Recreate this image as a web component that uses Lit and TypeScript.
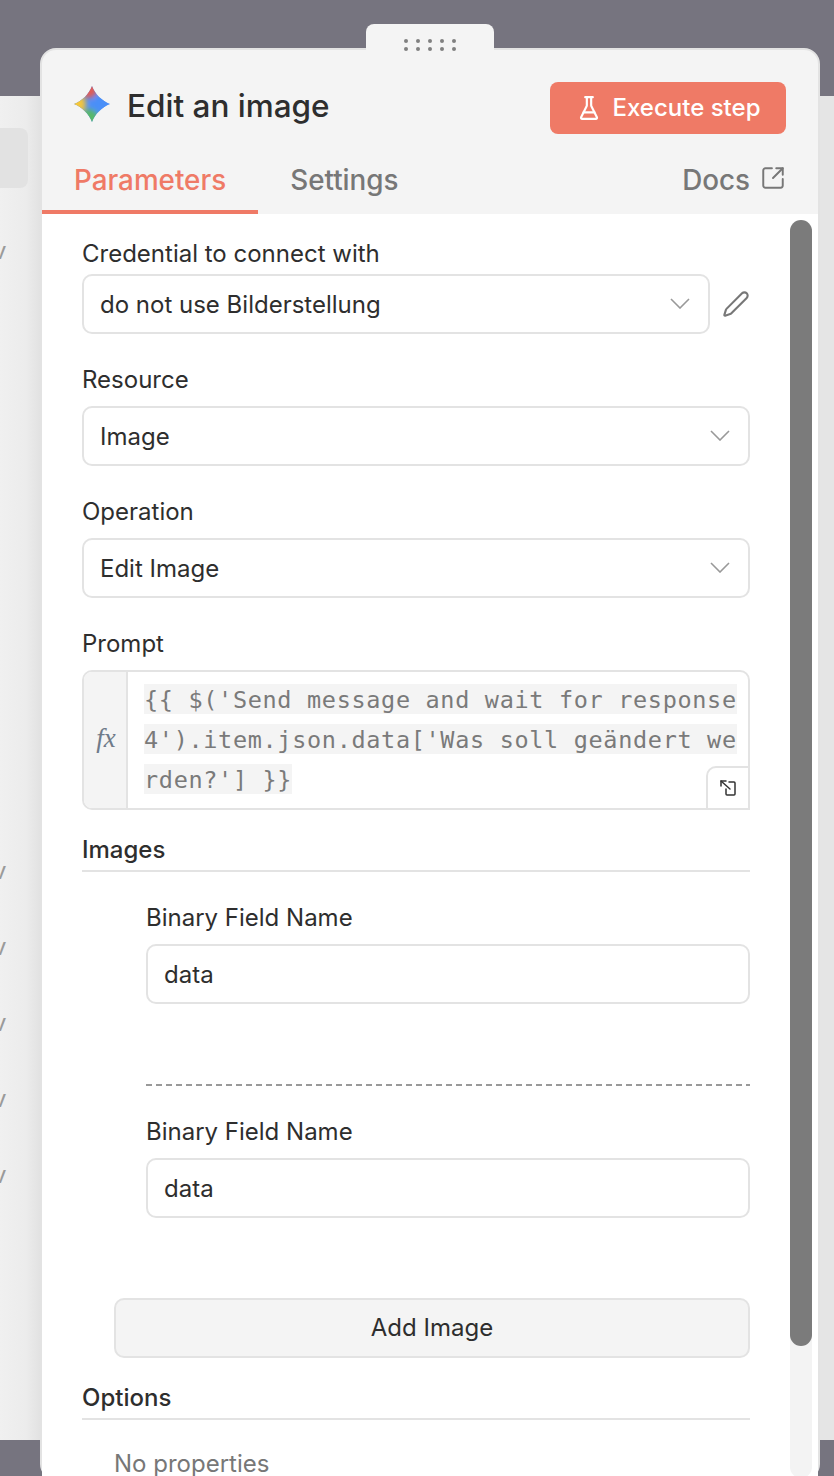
import { LitElement, css, html, svg } from 'lit'
import { customElement } from 'lit/decorators.js'

const chevron = html`<svg class="chevron" viewBox="0 0 20 11" fill="none"><path d="M1 1l9 9 9-9" stroke="#999" stroke-width="1.6"/></svg>`

const handleDots = [0, 12, 24, 36, 48].flatMap((x) =>
  [0, 8].map((y) => svg`<circle cx=${x + 2} cy=${y + 2} r="2" fill="#808080"></circle>`)
)

@customElement('app-root')
export class AppRoot extends LitElement {
  static styles = css`
    :host {
      display: block;
      position: relative;
      width: 834px;
      height: 1476px;
      overflow: hidden;
      font-family: Inter, 'Liberation Sans', sans-serif;
      color: #2e2e2e;
      background: #76747f;
    }

    /* canvas behind the sheet */
    .backdrop {
      position: absolute;
      left: 0;
      right: 0;
      top: 96px;
      height: 1344px;
      background: linear-gradient(90deg, #f0f0f0 0, #ececec 26px, #e2e2e2 40px, #e5e5e5 41px);
    }
    .chip {
      width: 28px;
      height: 60px;
      margin-top: 32px;
      border-radius: 0 8px 8px 0;
      background: #e2e2e2;
    }
    .mark {
      margin: 44px 0 0 -7px;
      font-size: 24px;
      line-height: 32px;
      color: #9a9a9a;
    }
    .mark.first { margin-top: 47px; }
    .mark.second { margin-top: 588px; }

    .sheet {
      position: relative;
      box-sizing: border-box;
      display: flex;
      flex-direction: column;
      width: 780px;
      height: 1432px;
      margin: 48px 0 0 40px;
      border: 2px solid #e3e3e3;
      border-radius: 16px;
      background: #f4f4f4;
    }
    .handle {
      position: absolute;
      left: 324px;
      top: -26px;
      display: flex;
      justify-content: center;
      box-sizing: border-box;
      width: 128px;
      height: 28px;
      padding-top: 15px;
      border-radius: 8px 8px 0 0;
      background: #f4f4f4;
    }
    .handle svg { width: 52px; height: 12px; }

    .head {
      display: flex;
      align-items: center;
      height: 52px;
      padding: 32px 32px 0 32px;
    }
    .logo { width: 36px; height: 36px; margin-top: -8px; }
    .title {
      flex: 1;
      margin: -4px 0 0 17px;
      font-size: 31.5px;
      font-weight: 500;
      line-height: 40px;
    }
    .run {
      display: flex;
      align-items: center;
      justify-content: center;
      gap: 11px;
      box-sizing: border-box;
      width: 236px;
      height: 52px;
      padding-bottom: 1px;
      border-radius: 8px;
      background: #ef7a66;
      color: #fff;
      font-size: 24px;
      font-weight: 500;
    }
    .run svg { width: 26px; height: 26px; }

    .tabs {
      display: flex;
      margin-top: 26px;
      font-size: 27.8px;
      font-weight: 500;
      line-height: 40px;
      color: #777;
    }
    .tab { padding: 0 32px 14px; }
    .tab.active {
      padding-bottom: 10px;
      border-bottom: 4px solid #ef7a66;
      color: #ef7a66;
    }
    .docs {
      display: flex;
      gap: 10px;
      margin-left: auto;
      padding-right: 32px;
    }
    .docs svg { width: 26px; height: 26px; margin-top: 5px; }

    .body {
      flex: 1;
      display: flex;
      min-height: 0;
      padding: 6px 6px 0 0;
      background: #fff;
    }
    .form {
      flex: 1;
      min-width: 0;
      padding: 18px 40px 0 40px;
      overflow: hidden;
    }
    .track {
      width: 22px;
      border-radius: 11px;
      background: #f3f3f3;
    }
    .thumb {
      height: 1126px;
      border-radius: 11px;
      background: #7b7b7b;
    }

    .label {
      margin: 30px 0 10px;
      font-size: 24px;
      line-height: 32px;
    }
    .label.tight { margin: 0 0 4px; }
    .row {
      display: flex;
      align-items: center;
      gap: 12px;
    }
    .row svg.edit { width: 28px; height: 28px; flex: none; }
    .box {
      flex: 1;
      box-sizing: border-box;
      display: flex;
      align-items: center;
      justify-content: space-between;
      height: 60px;
      padding: 0 18px 0 16px;
      border: 2px solid #e3e3e3;
      border-radius: 10px;
      background: #fff;
      font-size: 24px;
    }
    .chevron { width: 20px; height: 11px; margin-top: -2px; }

    .editor {
      position: relative;
      box-sizing: border-box;
      display: flex;
      height: 140px;
      border: 2px solid #e3e3e3;
      border-radius: 10px 10px 0 10px;
      overflow: hidden;
    }
    .fx {
      flex: none;
      display: flex;
      align-items: center;
      justify-content: center;
      box-sizing: border-box;
      width: 44px;
      padding: 0 0 4px 2px;
      border-right: 2px solid #e3e3e3;
      background: #f4f4f4;
      font-family: 'Liberation Serif', serif;
      font-style: italic;
      font-size: 27px;
      color: #6f7b8a;
    }
    .code {
      padding: 12px 0 0 16px;
      font-family: 'DejaVu Sans Mono', 'Liberation Mono', monospace;
      font-size: 23.5px;
      letter-spacing: 0.67px;
      color: #7a7a7a;
    }
    .line { height: 40px; }
    .line span {
      display: inline-block;
      height: 30px;
      line-height: 32px;
      background: #f4f4f4;
      white-space: pre;
    }
    .expand {
      position: absolute;
      right: -2px;
      bottom: -2px;
      display: flex;
      align-items: center;
      justify-content: center;
      box-sizing: border-box;
      width: 44px;
      height: 44px;
      border: 2px solid #e3e3e3;
      border-radius: 10px 0 0 0;
      background: #fff;
    }
    .expand svg { width: 18px; height: 18px; }

    .section {
      margin-top: 24px;
      padding-bottom: 4px;
      border-bottom: 2px solid #e3e3e3;
      font-size: 24px;
      font-weight: 500;
      line-height: 32px;
    }
    .item { margin-left: 64px; }
    .sep {
      margin: 80px 0 0 64px;
      height: 2px;
      background: repeating-linear-gradient(90deg, #999 0 6px, transparent 6px 10px);
    }
    .add {
      display: flex;
      align-items: center;
      justify-content: center;
      box-sizing: border-box;
      height: 60px;
      margin: 80px 0 0 32px;
      padding-bottom: 1px;
      border: 2px solid #e3e3e3;
      border-radius: 10px;
      background: #f4f4f4;
      font-size: 24px;
    }
    .empty {
      margin: 28px 0 0 32px;
      font-size: 24px;
      line-height: 32px;
      color: #777;
    }
  `

  render() {
    return html`
      <div class="backdrop">
        <div class="chip"></div>
        <div class="mark first">v</div>
        <div class="mark second">v</div>
        <div class="mark">v</div>
        <div class="mark">v</div>
        <div class="mark">v</div>
        <div class="mark">v</div>
      </div>

      <div class="sheet">
        <div class="handle"><svg viewBox="0 0 52 12">${handleDots}</svg></div>

        <div class="head">
          <svg class="logo" viewBox="0 0 36 36">
            <defs>
              <clipPath id="star">
                <path d="M18 0C21 8 28 15 36 18C28 21 21 28 18 36C15 28 8 21 0 18C8 15 15 8 18 0Z" />
              </clipPath>
              <filter id="soft" x="-50%" y="-50%" width="200%" height="200%">
                <feGaussianBlur stdDeviation="2.500" />
              </filter>
            </defs>
            <g clip-path="url(#star)">
              <rect width="36" height="36" fill="#4f8ff5" />
              <g filter="url(#soft)">
                <circle cx="15" cy="4" r="8" fill="#e25b55" />
                <circle cx="3" cy="18" r="9" fill="#f4c63a" />
                <circle cx="15" cy="33" r="10" fill="#58b86a" />
                <circle cx="27" cy="18" r="8" fill="#4a8ff8" />
              </g>
            </g>
          </svg>
          <div class="title">Edit an image</div>
          <div class="run">
            <svg viewBox="0 0 24 24" fill="none" stroke="#fff" stroke-width="2" stroke-linecap="round" stroke-linejoin="round">
              <path d="M10 2v7.527a2 2 0 0 1-.211.896L4.720 20.550a1 1 0 0 0 .9 1.450h12.760a1 1 0 0 0 .9-1.450l-5.069-10.127A2 2 0 0 1 14 9.527V2" />
              <path d="M8.500 2h7" />
              <path d="M7 16h10" />
            </svg>
            Execute step
          </div>
        </div>

        <div class="tabs">
          <div class="tab active">Parameters</div>
          <div class="tab">Settings</div>
          <div class="docs">
            Docs
            <svg viewBox="0 0 24 24" fill="none" stroke="#777" stroke-width="1.800" stroke-linecap="round" stroke-linejoin="round">
              <path d="M21 13v6a2 2 0 0 1-2 2H5a2 2 0 0 1-2-2V5a2 2 0 0 1 2-2h6" />
              <path d="m21 3-9 9" />
              <path d="M15 3h6v6" />
            </svg>
          </div>
        </div>

        <div class="body">
          <div class="form">
            <div class="label tight">Credential to connect with</div>
            <div class="row">
              <div class="box">do not use Bilderstellung ${chevron}</div>
              <svg class="edit" viewBox="0 0 24 24" fill="none" stroke="#777" stroke-width="1.800" stroke-linejoin="round">
                <path d="M21.174 6.812a1 1 0 0 0-3.986-3.987L3.842 16.174a2 2 0 0 0-.5.830l-1.321 4.352a.5.500 0 0 0 .623.622l4.353-1.320a2 2 0 0 0 .830-.497z" />
              </svg>
            </div>

            <div class="label">Resource</div>
            <div class="box">Image ${chevron}</div>

            <div class="label">Operation</div>
            <div class="box">Edit Image ${chevron}</div>

            <div class="label">Prompt</div>
            <div class="editor">
              <div class="fx">fx</div>
              <div class="code">
                <div class="line"><span>{{ $('Send message and wait for response</span></div>
                <div class="line"><span>4').item.json.data['Was soll geändert we</span></div>
                <div class="line"><span>rden?'] }}</span></div>
              </div>
              <div class="expand">
                <svg viewBox="0 0 18 18" fill="none" stroke="#333" stroke-width="1.500" stroke-linecap="round" stroke-linejoin="round">
                  <path d="M2 2l9 8" />
                  <path d="M2 2v5M2 2h5" />
                  <path d="M10 3h5a1 1 0 0 1 1 1v11a1 1 0 0 1-1 1H8a1 1 0 0 1-1-1v-5" />
                </svg>
              </div>
            </div>

            <div class="section">Images</div>
            <div class="item">
              <div class="label">Binary Field Name</div>
              <div class="box">data</div>
            </div>
            <div class="sep"></div>
            <div class="item">
              <div class="label">Binary Field Name</div>
              <div class="box">data</div>
            </div>
            <div class="add">Add Image</div>

            <div class="section">Options</div>
            <div class="empty">No properties</div>
          </div>
          <div class="track"><div class="thumb"></div></div>
        </div>
      </div>
    `
  }
}

declare global {
  interface HTMLElementTagNameMap {
    'app-root': AppRoot
  }
}
